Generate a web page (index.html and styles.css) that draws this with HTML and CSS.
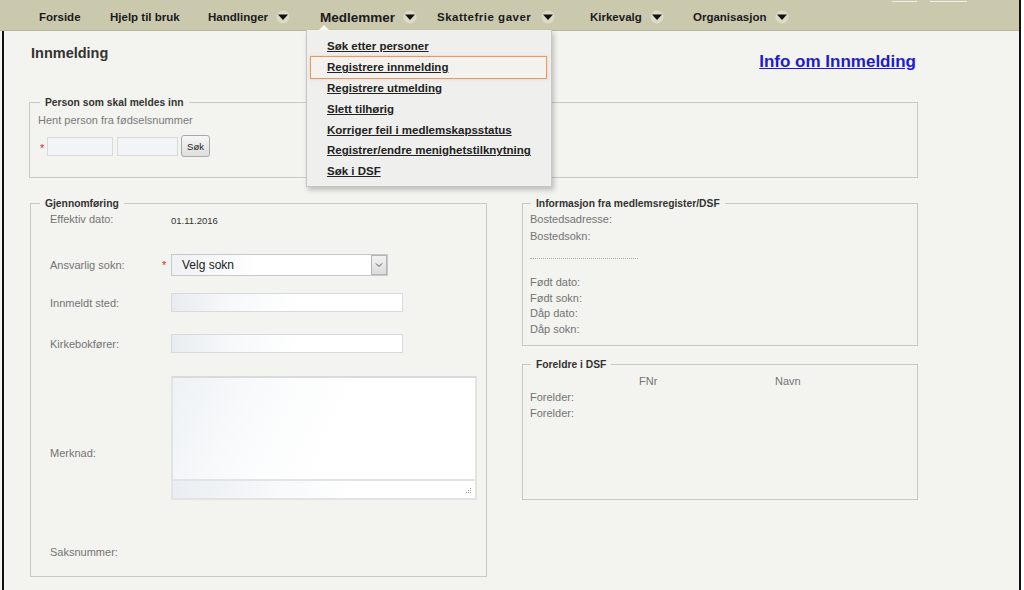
FILE: index.html
```html
<!DOCTYPE html>
<html lang="no">
<head>
<meta charset="utf-8">
<title>Innmelding</title>
<link rel="stylesheet" href="styles.css">
</head>
<body>
<div class="frame">
  <nav class="topbar">
    <div class="nav-item">Forside</div>
    <div class="nav-item">Hjelp til bruk</div>
    <div class="nav-item">Handlinger<svg class="caret" viewBox="0 0 14 14" width="14" height="14"><circle cx="7" cy="7" r="6.5" fill="#dcdbc6"/><polygon points="2,4.5 12,4.5 7,10" fill="#111"/></svg></div>
    <div class="nav-item nav-open"><span class="nav-big">Medlemmer</span><svg class="caret" viewBox="0 0 14 14" width="14" height="14"><circle cx="7" cy="7" r="6.5" fill="#dcdbc6"/><polygon points="2,4.5 12,4.5 7,10" fill="#111"/></svg>
      <ul class="submenu">
        <li class="sub-item"><a>Søk etter personer</a></li>
        <li class="sub-item sub-active"><a>Registrere innmelding</a></li>
        <li class="sub-item"><a>Registrere utmelding</a></li>
        <li class="sub-item"><a>Slett tilhørig</a></li>
        <li class="sub-item"><a>Korriger feil i medlemskapsstatus</a></li>
        <li class="sub-item"><a>Registrer/endre menighetstilknytning</a></li>
        <li class="sub-item"><a>Søk i DSF</a></li>
      </ul>
    </div>
    <div class="nav-item nav-wide">Skattefrie gaver<svg class="caret" viewBox="0 0 14 14" width="14" height="14"><circle cx="7" cy="7" r="6.5" fill="#dcdbc6"/><polygon points="2,4.5 12,4.5 7,10" fill="#111"/></svg></div>
    <div class="nav-item">Kirkevalg<svg class="caret" viewBox="0 0 14 14" width="14" height="14"><circle cx="7" cy="7" r="6.5" fill="#dcdbc6"/><polygon points="2,4.5 12,4.5 7,10" fill="#111"/></svg></div>
    <div class="nav-item">Organisasjon<svg class="caret" viewBox="0 0 14 14" width="14" height="14"><circle cx="7" cy="7" r="6.5" fill="#dcdbc6"/><polygon points="2,4.5 12,4.5 7,10" fill="#111"/></svg></div>
    <div class="toplinks"><span class="tl tl-a"></span><span class="tl tl-b"></span></div>
  </nav>

  <main class="content">
    <div class="page-head">
      <h1 class="title">Innmelding</h1>
      <a class="info-link">Info om Innmelding</a>
    </div>

    <fieldset class="box box-person">
      <legend class="box-legend">Person som skal meldes inn</legend>
      <div class="hint">Hent person fra fødselsnummer</div>
      <div class="search-row">
        <span class="req req-small">*</span>
        <span class="inp inp-a"></span>
        <span class="inp inp-b"></span>
        <span class="btn">Søk</span>
      </div>
    </fieldset>

    <div class="columns">
      <fieldset class="box box-main">
        <legend class="box-legend">Gjennomføring</legend>
        <div class="frow row-dato">
          <span class="lbl">Effektiv dato:</span><span class="star"></span><span class="val">01.11.2016</span>
        </div>
        <div class="frow row-sokn">
          <span class="lbl">Ansvarlig sokn:</span><span class="star req">*</span>
          <div class="select"><span class="select-text">Velg sokn</span><span class="select-btn"><svg viewBox="0 0 10 8" width="10" height="8"><polyline points="2,2.5 5,5.5 8,2.5" fill="none" stroke="#555" stroke-width="1"/></svg></span></div>
        </div>
        <div class="frow row-sted">
          <span class="lbl">Innmeldt sted:</span><span class="star"></span><span class="inp inp-wide"></span>
        </div>
        <div class="frow row-kirke">
          <span class="lbl">Kirkebokfører:</span><span class="star"></span><span class="inp inp-wide"></span>
        </div>
        <div class="frow row-merknad">
          <span class="lbl">Merknad:</span><span class="star"></span>
          <div class="textarea"><div class="ta-body"></div><div class="ta-foot"><svg class="grip" viewBox="0 0 7 7" width="7" height="7"><rect x="5" y="0" width="1" height="1" fill="#999"/><rect x="3" y="2" width="1" height="1" fill="#999"/><rect x="5" y="2" width="1" height="1" fill="#999"/><rect x="1" y="4" width="1" height="1" fill="#999"/><rect x="3" y="4" width="1" height="1" fill="#999"/><rect x="5" y="4" width="1" height="1" fill="#999"/></svg></div></div>
        </div>
        <div class="frow row-saks">
          <span class="lbl">Saksnummer:</span>
        </div>
      </fieldset>

      <div class="side">
        <fieldset class="box box-info">
          <legend class="box-legend">Informasjon fra medlemsregister/DSF</legend>
          <div class="info-top">
            <div class="lbl">Bostedsadresse:</div>
            <div class="lbl">Bostedsokn:</div>
          </div>
          <div class="dots"></div>
          <div class="info-bottom">
            <div class="lbl">Født dato:</div>
            <div class="lbl">Født sokn:</div>
            <div class="lbl">Dåp dato:</div>
            <div class="lbl">Dåp sokn:</div>
          </div>
        </fieldset>

        <fieldset class="box box-parents">
          <legend class="box-legend">Foreldre i DSF</legend>
          <div class="parents">
            <span></span><span class="lbl">FNr</span><span class="lbl">Navn</span>
            <span class="lbl">Forelder:</span><span></span><span></span>
            <span class="lbl">Forelder:</span><span></span><span></span>
          </div>
        </fieldset>
      </div>
    </div>
  </main>
</div>
</body>
</html>
```

FILE: styles.css
```css
html, body {
  margin: 0;
  padding: 0;
  overflow: hidden;
  background: #ffffff;
  font-family: "Liberation Sans", Arial, sans-serif;
}

.frame {
  width: 1019px;
  height: 590px;
  border-right: 2px solid #111;
  background: #f3f3ef;
  overflow: hidden;
}

/* ---------- top navigation ---------- */
.topbar {
  height: 30px;
  border-bottom: 1px solid #b8b79c;
  background: #cac9ae;
  padding-left: 39px;
  display: grid;
  grid-template-columns: 71px 98px 112px 117px 153px 103px 110px 1fr;
  grid-template-rows: 30px;
  align-items: stretch;
  position: relative;
  z-index: 5;
}

.nav-item {
  display: flex;
  align-items: center;
  padding-top: 4px;
  box-sizing: border-box;
  font-weight: bold;
  font-size: 11.5px;
  color: #1b1b1b;
  white-space: nowrap;
  position: relative;
}

.nav-wide {
  letter-spacing: 0.5px;
}

.nav-wide .caret {
  margin-left: 10px;
}

.nav-big {
  font-size: 13.5px;
}

.caret {
  margin-left: 8px;
  display: block;
}

.toplinks {
  justify-self: end;
  align-self: start;
  display: flex;
  gap: 13px;
  margin-top: 1px;
  margin-right: 52px;
}

.tl {
  display: block;
  height: 0;
  border-top: 1px solid #f1f0e2;
}
.tl-a { width: 25px; }
.tl-b { width: 37px; }

/* ---------- dropdown ---------- */
.submenu {
  position: absolute;
  top: 30px;
  left: -14px;
  width: 246px;
  box-sizing: border-box;
  margin: 0;
  padding: 6px 0 4px;
  list-style: none;
  background: #efefed;
  border: 1px solid #c6c6c2;
  border-top: none;
  box-shadow: 2px 3px 5px rgba(0, 0, 0, 0.22);
  letter-spacing: 0;
}

.submenu::before {
  content: "";
  position: absolute;
  top: -5px;
  left: 12px;
  border-left: 5px solid transparent;
  border-right: 5px solid transparent;
  border-bottom: 5px solid #f7f7f4;
}

.sub-item {
  height: 20.8px;
  margin: 0 4px 0 3px;
  padding-left: 17px;
  display: flex;
  align-items: center;
  box-sizing: border-box;
}

.sub-item a {
  font-weight: bold;
  font-size: 11.5px;
  color: #222;
  text-decoration: underline;
  white-space: nowrap;
}

.sub-active {
  height: 22.8px;
  margin-top: -1px;
  margin-bottom: -1px;
  border: 1px solid #e39a66;
  padding-left: 16px;
  background: #f4f2ee;
  box-shadow: 0 0 3px rgba(240, 170, 120, 0.45);
}

/* ---------- content ---------- */
.content {
  margin-left: 2px;
  border-left: 2px solid #111;
  height: 559px;
  padding: 0 101px 0 25px;
  background: #f3f3ef;
}

.page-head {
  height: 65px;
  display: flex;
  justify-content: space-between;
  align-items: flex-start;
}

.title {
  margin: 14px 0 0 2px;
  font-size: 14.5px;
  line-height: 17px;
  font-weight: bold;
  color: #333;
}

.info-link {
  margin: 21px 2px 0 0;
  font-size: 17px;
  line-height: 20px;
  font-weight: bold;
  color: #1d1ccc;
  text-decoration: underline;
}

.box {
  margin: 0;
  border: 1px solid #c9c9c4;
  min-width: 0;
  box-sizing: border-box;
}

.box-legend {
  padding: 0 5px;
  font-size: 10.3px;
  line-height: 13px;
  font-weight: bold;
  color: #333;
}

.lbl {
  font-size: 11px;
  line-height: 14px;
  color: #747474;
  white-space: nowrap;
}

.req {
  color: #e0262a;
  font-size: 11px;
}

/* person box */
.box-person {
  padding: 4px 8px 20px;
}
.box-person .box-legend {
  margin-left: 2px;
}

.hint {
  font-size: 11px;
  line-height: 14px;
  color: #7a7a7a;
}

.search-row {
  margin-top: 8px;
  height: 22px;
  display: flex;
  align-items: center;
}

.req-small {
  width: 9px;
  padding-left: 2px;
  box-sizing: border-box;
  line-height: 10px;
  padding-top: 3px;
}

.inp {
  display: block;
  height: 19px;
  box-sizing: border-box;
  border: 1px solid #d7d9db;
  background: linear-gradient(100deg, #e8ecf0 0%, #f6f8f9 25%, #ffffff 55%);
}

.box-person .inp {
  background: #f2f5f8;
}

.inp-a { width: 66px; }
.inp-b { width: 61px; margin-left: 4px; }

.btn {
  margin-left: 3px;
  width: 29px;
  height: 22px;
  box-sizing: border-box;
  border: 1px solid #a9a9a9;
  border-radius: 3px;
  background: linear-gradient(#f7f7f7, #dedede);
  font-size: 9.5px;
  color: #222;
  display: flex;
  align-items: center;
  justify-content: center;
}

/* columns */
.columns {
  margin-top: 19px;
  display: flex;
  gap: 35px;
  align-items: flex-start;
}

.box-main {
  margin-left: 1px;
  width: 457px;
  padding: 2px 8px 17px 19px;
}
.box-main .box-legend {
  margin-left: -10px;
}

.frow {
  display: flex;
  align-items: center;
}

.frow .lbl {
  width: 112px;
}

.star {
  width: 9px;
  flex: none;
}

.row-dato { height: 14px; }
.row-sokn { height: 22px; margin-top: 28px; }
.row-sted { height: 19px; margin-top: 17px; }
.row-kirke { height: 19px; margin-top: 22px; }
.row-merknad { height: 154px; margin-top: 23px; align-items: flex-start; }
.row-merknad .lbl { align-self: center; }
.row-saks { height: 14px; margin-top: 15px; }

.val {
  font-size: 9.5px;
  color: #333;
  padding-top: 3px;
}

.select {
  width: 217px;
  height: 22px;
  box-sizing: border-box;
  border: 1px solid #c8c8c8;
  background: linear-gradient(100deg, #eef1f4 0%, #ffffff 40%);
  display: flex;
  align-items: center;
  justify-content: space-between;
}

.select-text {
  padding-left: 10px;
  font-size: 12px;
  color: #222;
}

.select-btn {
  width: 16px;
  height: 20px;
  box-sizing: border-box;
  border: 1px solid #b4b4b4;
  background: linear-gradient(#f2f2f2, #dcdcdc);
  display: flex;
  align-items: center;
  justify-content: center;
}

.inp-wide {
  width: 232px;
}

.textarea {
  width: 306px;
  height: 124px;
  box-sizing: border-box;
  border: 2px solid #e3e3e3;
  border-top-color: #dadada;
  display: flex;
  flex-direction: column;
}

.ta-body {
  flex: 1;
  background: linear-gradient(115deg, #eef2f5 0%, #fafbfc 30%, #ffffff 55%);
}

.ta-foot {
  height: 17px;
  border-top: 2px solid #e3e3e3;
  background: linear-gradient(90deg, #eaeef2 0%, #f7f9fa 35%, #ffffff 60%);
  display: flex;
  justify-content: flex-end;
  align-items: flex-end;
}

.grip {
  display: block;
  margin: 0 3px 3px 0;
}

/* side column */
.side {
  width: 396px;
  display: flex;
  flex-direction: column;
}

.box-info {
  padding: 1px 8px 7px 7px;
}
.box-info .box-legend { margin-left: 1px; }

.info-top .lbl {
  line-height: 17px;
}

.dots {
  width: 108px;
  margin-top: 13px;
  border-top: 1px dotted #a9a9a9;
}

.info-bottom {
  margin-top: 16px;
}

.info-bottom .lbl {
  line-height: 15.7px;
}

.box-parents {
  margin-top: 12px;
  padding: 2px 8px 78px 7px;
}
.box-parents .box-legend { margin-left: 1px; }

.parents {
  display: grid;
  grid-template-columns: 109px 136px 1fr;
}

.parents .lbl {
  line-height: 16px;
}
```
